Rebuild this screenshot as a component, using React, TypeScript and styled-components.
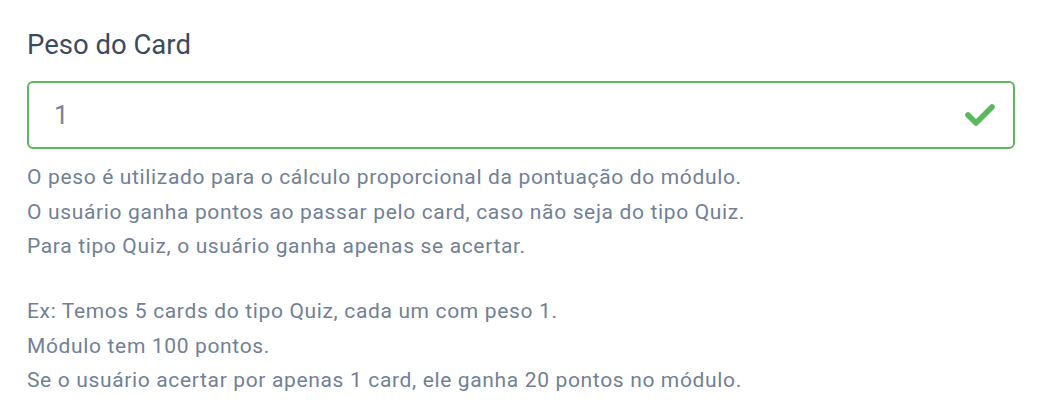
import styled, { createGlobalStyle } from 'styled-components';

const GlobalStyle = createGlobalStyle`
  body {
    margin: 0;
    background: #ffffff;
    font-family: Roboto, 'Noto Sans', sans-serif;
  }
`;

const FieldWrapper = styled.div`
  display: flex;
  flex-direction: column;
  padding: 28px 31px 0 27px;
`;

const Label = styled.label`
  font-size: 27.5px;
  line-height: 33px;
  color: #3c4a60;
  margin-bottom: 20px;
`;

const InputBox = styled.div`
  display: flex;
  align-items: center;
  justify-content: space-between;
  height: 68px;
  box-sizing: border-box;
  padding: 0 16px 0 25px;
  border: 2px solid #5cb85c;
  border-radius: 6px;
`;

const InputText = styled.span`
  font-size: 26px;
  color: #7a8494;
`;

const HelpText = styled.p`
  margin: 0;
  font-size: 21px;
  letter-spacing: 0.65px;
  line-height: 34.5px;
  color: #718096;

  & + & {
    margin-top: 30.5px;
  }
`;

const HelpBlock = styled.div`
  display: flex;
  flex-direction: column;
  margin-top: 11px;
`;

function CheckIcon() {
  return (
    <svg width="34" height="28" viewBox="0 0 34 28" fill="none">
      <polyline
        points="5,14 13,22 29,6"
        stroke="#5cb85c"
        strokeWidth="5.5"
        strokeLinecap="round"
        strokeLinejoin="round"
      />
    </svg>
  );
}

function App() {
  return (
    <>
      <GlobalStyle />
      <FieldWrapper>
        <Label>Peso do Card</Label>
        <InputBox>
          <InputText>1</InputText>
          <CheckIcon />
        </InputBox>
        <HelpBlock>
          <HelpText>
            O peso é utilizado para o cálculo proporcional da pontuação do módulo.
            <br />
            O usuário ganha pontos ao passar pelo card, caso não seja do tipo Quiz.
            <br />
            Para tipo Quiz, o usuário ganha apenas se acertar.
          </HelpText>
          <HelpText>
            Ex: Temos 5 cards do tipo Quiz, cada um com peso 1.
            <br />
            Módulo tem 100 pontos.
            <br />
            Se o usuário acertar por apenas 1 card, ele ganha 20 pontos no módulo.
          </HelpText>
        </HelpBlock>
      </FieldWrapper>
    </>
  );
}

export default App;
